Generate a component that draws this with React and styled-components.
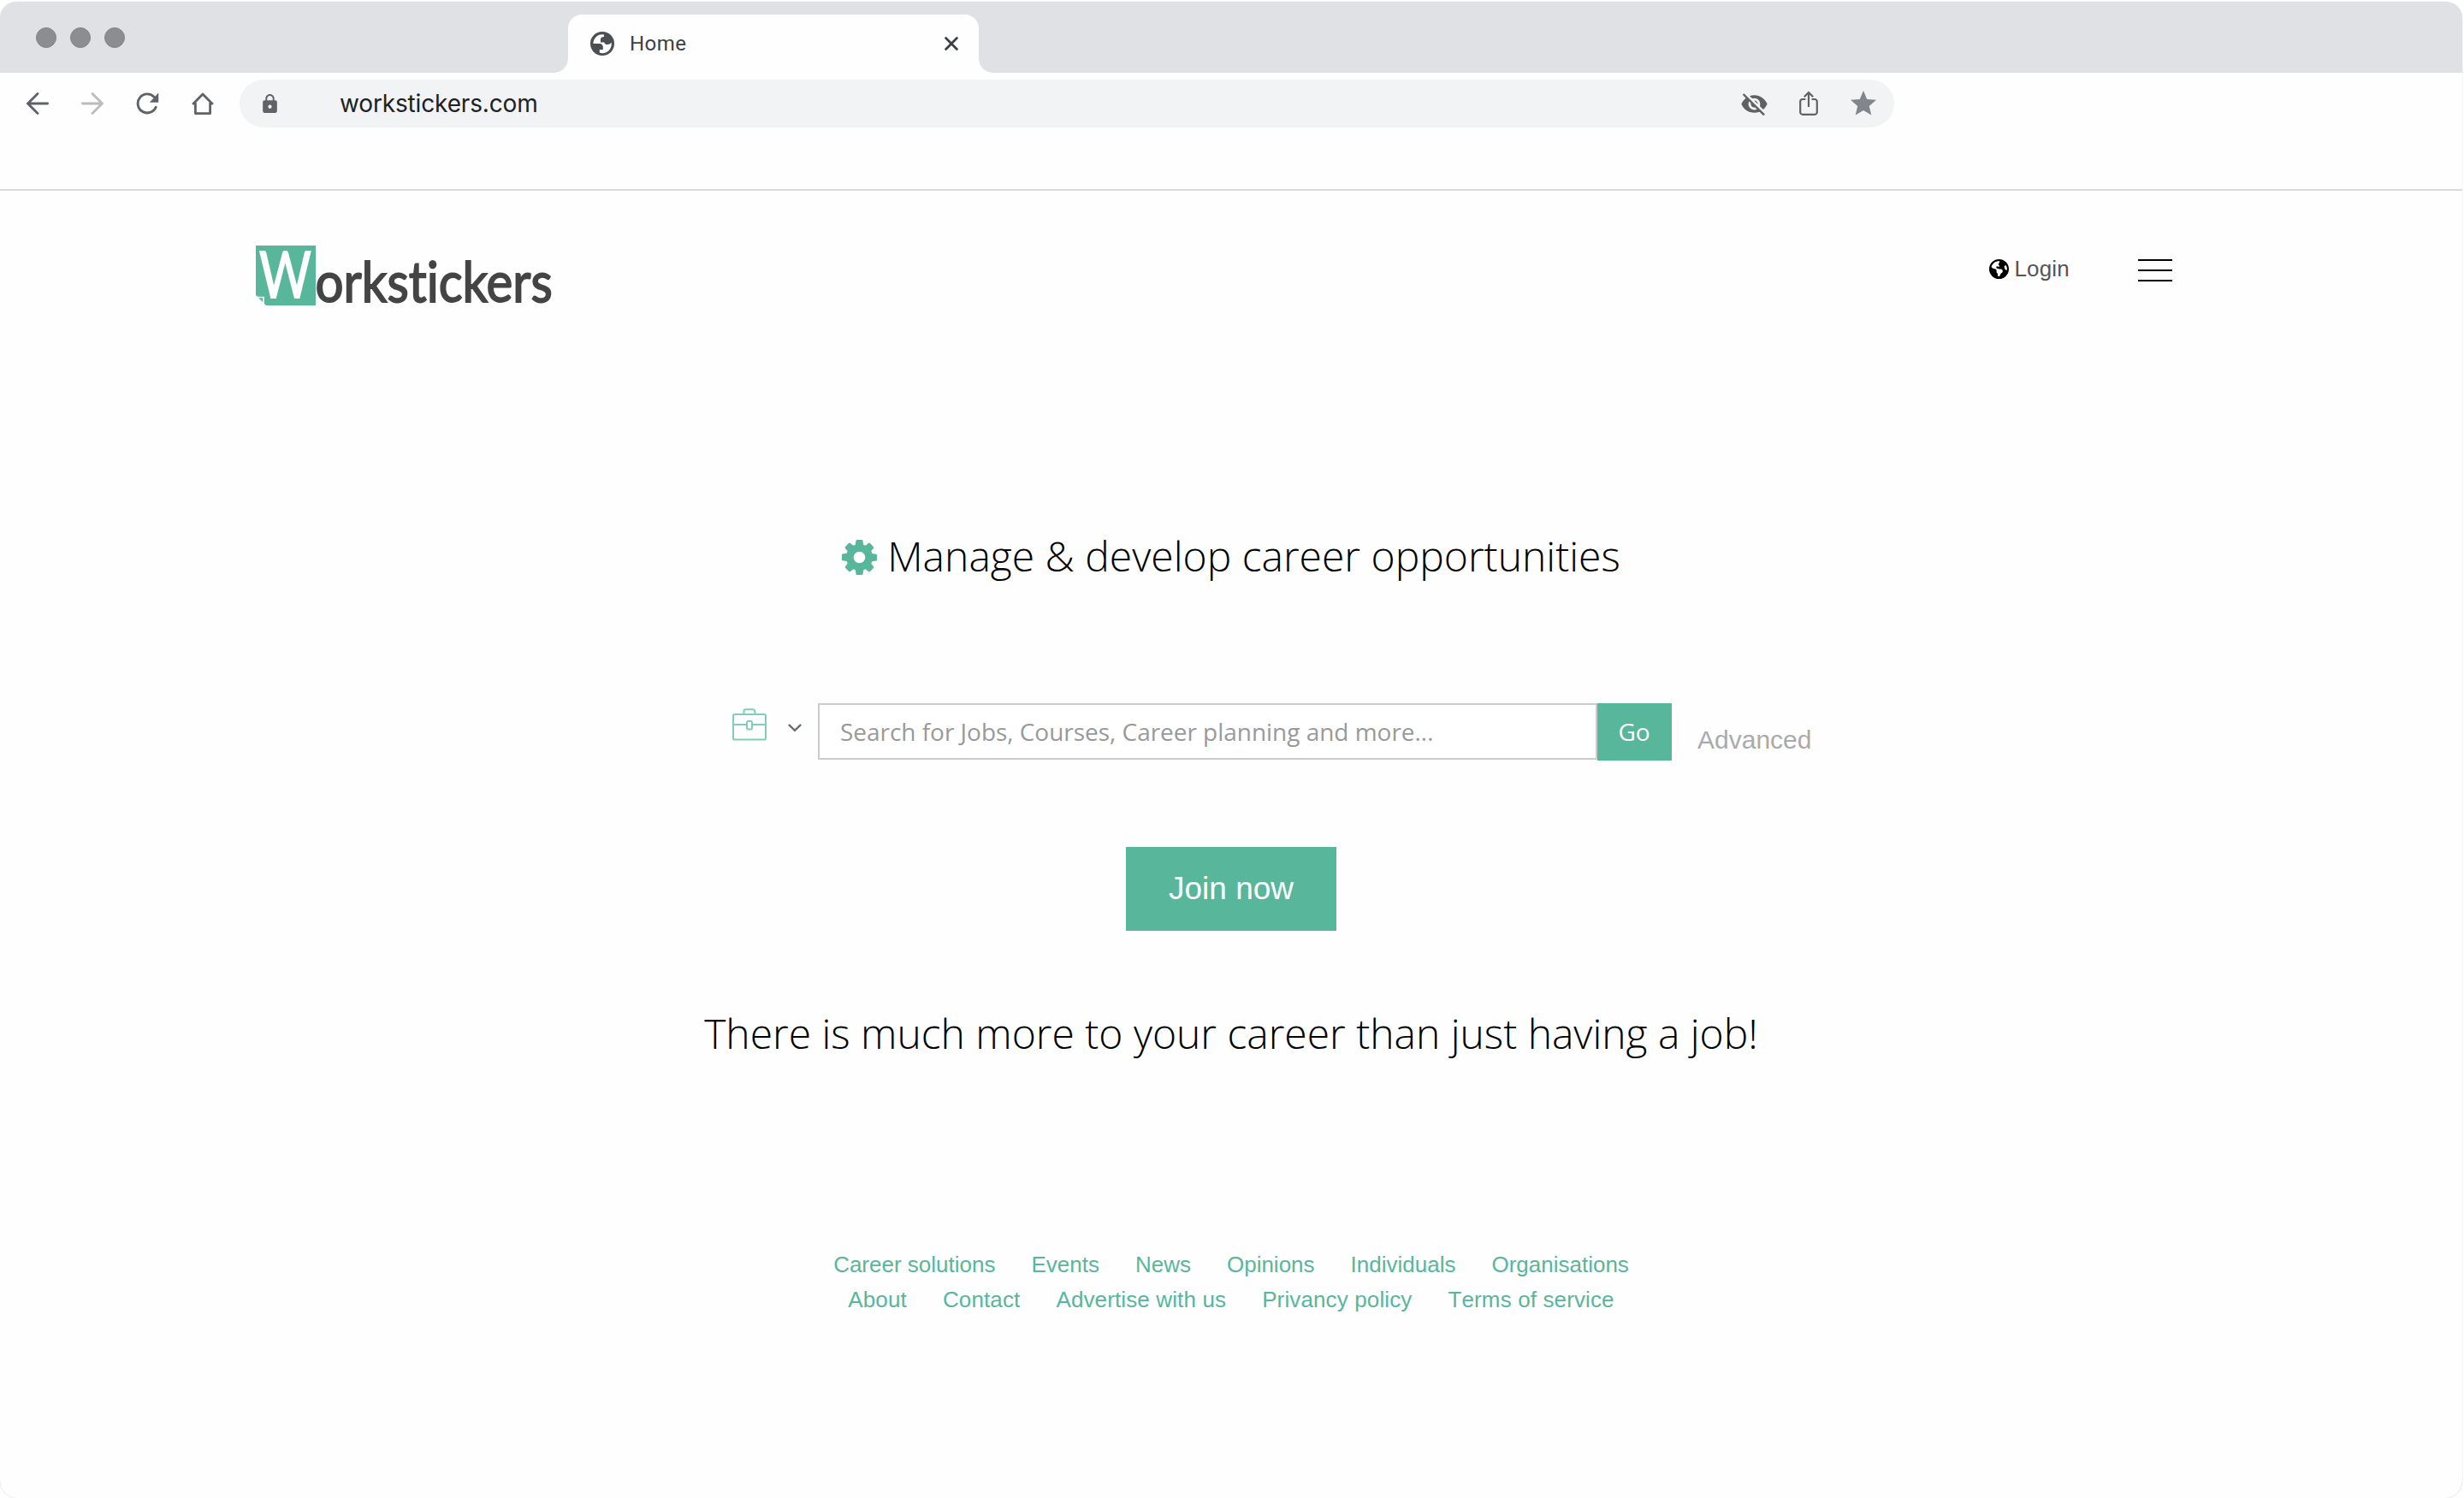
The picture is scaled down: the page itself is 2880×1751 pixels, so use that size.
import React from 'react'
import styled, { createGlobalStyle } from 'styled-components'
import { FaEarthAmericas } from 'react-icons/fa6'
import { MdStar, MdLock, MdVisibilityOff } from 'react-icons/md'

const green = '#58b69b'

const footerLinks = [
    ['Career solutions', 'Events', 'News', 'Opinions', 'Individuals', 'Organisations'],
    ['About', 'Contact', 'Advertise with us', 'Privancy policy', 'Terms of service'],
]

const GlobeIcon = () => (
    <svg width="28" height="28" viewBox="0 0 28 28">
        <circle cx="14" cy="14" r="14" fill="#4d4e53" />
        <path
            fill="#fff"
            d="M3.4 14A10.6 10.6 0 0 1 16 3.4V6C13.6 6.3 12 7 12 8.6V12.4H16.4C17 14.2 18 15 19 15H20.8C22.4 15 23.4 14.2 24 13H24.6A10.6 10.6 0 0 1 10.8 24.6V21H14.8V17.6C14.4 15.4 13 14 11 14Z"
        />
    </svg>
)

const CloseIcon = () => (
    <svg width="16" height="16" viewBox="0 0 16 16" stroke="#3c4043" strokeWidth="2.8" strokeLinecap="round">
        <path d="M1.6 1.6 14.4 14.4M14.4 1.6 1.6 14.4" />
    </svg>
)

const ArrowIcon = ({ forward }) => (
    <svg width="26" height="26" viewBox="0 0 26 26" fill="none" stroke={forward ? '#babcbe' : '#5f6368'} strokeWidth="2.8" strokeLinecap="round">
        <path d={forward ? 'M1.4 13H24M13 1.6 24.4 13 13 24.4' : 'M24.6 13H2M13 1.6 1.6 13 13 24.4'} />
    </svg>
)

const ReloadIcon = () => (
    <svg width="27" height="26" viewBox="0 0 28 26" fill="none">
        <path d="M24 17.6A11.4 11.4 0 1 1 22 5.2" stroke="#5f6368" strokeWidth="3" strokeLinecap="round" />
        <path d="M27.2 0V11.6H16.4Z" fill="#5f6368" />
    </svg>
)

const HomeIcon = () => (
    <svg width="26" height="26" viewBox="0 0 26 26" fill="none" stroke="#5f6368" strokeWidth="2.8">
        <path d="M1.2 14 13 2 24.8 14M4.4 12V24.6H21.6V12" strokeLinejoin="round" />
    </svg>
)

const ShareIcon = () => (
    <svg width="22" height="30" viewBox="0 0 22 30" fill="none" stroke="#5f6163" strokeWidth="2.2">
        <path d="M7.4 10H4A2.8 2.8 0 0 0 1.2 12.8V25A2.8 2.8 0 0 0 4 27.8H18A2.8 2.8 0 0 0 20.8 25V12.8A2.8 2.8 0 0 0 18 10H14.6" />
        <path d="M11 19V2.4M5.8 7.2 11 2 16.2 7.2" />
    </svg>
)

const GearIcon = () => (
    <svg width="41" height="41" viewBox="128 128 1536 1536" fill={green}>
        <path d="M1152 896q0-106-75-181t-181-75-181 75-75 181 75 181 181 75 181-75 75-181zm512-109v222q0 12-8 23t-20 13l-185 28q-19 54-39 91 35 50 107 138 10 12 10 25t-9 23q-27 37-99 108t-94 71q-12 0-26-9l-138-108q-44 23-91 38-16 136-29 186-7 28-36 28h-222q-14 0-24.5-8.5t-11.5-21.5l-28-184q-49-16-90-37l-141 107q-10 9-25 9-14 0-25-11-126-114-165-168-7-10-7-23 0-12 8-23 15-21 51-66.5t54-70.5q-27-50-41-99l-183-27q-13-2-21-12.5t-8-23.5v-222q0-12 8-23t19-13l186-28q14-46 39-92-40-57-107-138-10-12-10-24 0-10 9-23 26-36 98.5-107.5t94.5-71.5q13 0 26 10l138 107q44-23 91-38 16-136 29-186 7-28 36-28h222q14 0 24.5 8.5t11.5 21.5l28 184q49 16 90 37l142-107q9-9 24-9 13 0 25 10 129 119 165 170 7 8 7 22 0 12-8 23-15 21-51 66.5t-54 70.5q26 50 41 98l183 28q13 2 21 12.5t8 23.5z" />
    </svg>
)

const BriefcaseIcon = () => (
    <svg width="40" height="38" viewBox="0 0 40 38" fill="none" stroke="#80cdb8" strokeWidth="2">
        <rect x="1" y="7" width="38" height="29.6" rx="1.6" />
        <path d="M13.4 7V3.6A2.4 2.4 0 0 1 15.8 1.2H24A2.4 2.4 0 0 1 26.4 3.6V7M1 19H17M23 19H39" />
        <rect x="17" y="15" width="6" height="9.4" rx="1.6" />
    </svg>
)

const ChevronIcon = () => (
    <svg width="16" height="10" viewBox="0 0 16 10" fill="none" stroke="#676e73" strokeWidth="2.4" strokeLinecap="round">
        <path d="M1.6 1.6 8 7.8 14.4 1.6" />
    </svg>
)

const Logo = () => (
    <LogoSvg width="356" height="92" viewBox="0 -10 356 92">
        <path d="M0 0H70V70H12L0 58Z" fill={green} />
        <path d="M1 60.5H9V69" fill="none" stroke="#fff" strokeWidth="1.6" />
        <g transform="translate(4 61) scale(0.75 1)">
            <LogoText fontSize="75" textLength="81" fill="#fff" stroke="#fff">W</LogoText>
        </g>
        <g transform="translate(69.5 65.5) scale(0.9 1)">
            <LogoText fontSize="66" textLength="308" fill="#444" stroke="#444">orkstickers</LogoText>
        </g>
    </LogoSvg>
)

const App = () => (
    <>
        <GlobalStyle />
        <BrowserWindow>
            <TabStrip>
                <Dots>
                    <Dot />
                    <Dot />
                    <Dot />
                </Dots>
                <Tab>
                    <GlobeIcon />
                    <TabTitle>Home</TabTitle>
                    <CloseIcon />
                </Tab>
            </TabStrip>
            <Toolbar>
                <NavIcons>
                    <ArrowIcon />
                    <ArrowIcon forward />
                    <ReloadIcon />
                    <HomeIcon />
                </NavIcons>
                <AddressBar>
                    <MdLock size={25} color="#5f6368" />
                    <Url>workstickers.com</Url>
                    <AddressIcons>
                        <MdVisibilityOff size={33} color="#5f6163" />
                        <ShareIcon />
                        <MdStar size={36} color="#80868b" />
                    </AddressIcons>
                </AddressBar>
            </Toolbar>

            <Header>
                <Logo />
                <HeaderNav>
                    <Login>
                        <FaEarthAmericas size={23} color="#000" />
                        Login
                    </Login>
                    <MenuButton>
                        <MenuLine />
                        <MenuLine />
                        <MenuLine />
                    </MenuButton>
                </HeaderNav>
            </Header>

            <Main>
                <Title>
                    <GearIcon />
                    <span>Manage &amp; develop career opportunities</span>
                </Title>
                <SearchRow>
                    <Category>
                        <BriefcaseIcon />
                        <ChevronIcon />
                    </Category>
                    <SearchInput placeholder="Search for Jobs, Courses, Career planning and more..." />
                    <GoButton>Go</GoButton>
                    <Advanced>Advanced</Advanced>
                </SearchRow>
                <JoinButton>Join now</JoinButton>
                <Tagline>There is much more to your career than just having a job!</Tagline>
            </Main>

            <Footer>
                {footerLinks.map((row, i) => (
                    <FooterRow key={i}>
                        {row.map(name => <FooterLink key={name}>{name}</FooterLink>)}
                    </FooterRow>
                ))}
            </Footer>
        </BrowserWindow>
    </>
)

export default App

const GlobalStyle = createGlobalStyle`
    * {
        box-sizing: border-box;
    }
    body {
        margin: 0;
        background: #fff;
        font-family: "Liberation Sans", Arial, sans-serif;
    }
    svg {
        display: block;
        flex-shrink: 0;
    }
`

const BrowserWindow = styled.div`
    width: 2878px;
    height: 1749px;
    margin-top: 2px;
    border-radius: 20px;
    background: #fefefe;
    box-shadow: 0 0 1px rgba(0, 0, 0, 0.35);
    overflow: hidden;
`

const TabStrip = styled.div`
    display: flex;
    align-items: flex-end;
    height: 83px;
    background: #dfe1e5;
`

const Dots = styled.div`
    display: flex;
    gap: 16px;
    width: 664px;
    padding: 0 0 29px 42px;
`

const Dot = styled.div`
    width: 24px;
    height: 24px;
    border-radius: 50%;
    border: 1px solid #828385;
    background: #8c8d8f;
`

/* the two pseudo elements are the flared feet of the tab */
const Tab = styled.div`
    position: relative;
    display: flex;
    align-items: center;
    width: 480px;
    height: 68px;
    padding: 0 24px 0 26px;
    border-radius: 16px 16px 0 0;
    background: #fefefe;

    &::before, &::after {
        content: "";
        position: absolute;
        bottom: 0;
        width: 16px;
        height: 16px;
    }
    &::before {
        left: -16px;
        background: radial-gradient(circle at 0 0, transparent 15.5px, #fefefe 16px);
    }
    &::after {
        right: -16px;
        background: radial-gradient(circle at 100% 0, transparent 15.5px, #fefefe 16px);
    }
`

const TabTitle = styled.span`
    flex: 1;
    margin-left: 18px;
    font: 24px Roboto, sans-serif;
    letter-spacing: 0.5px;
    color: #3c4043;
`

const Toolbar = styled.div`
    display: flex;
    align-items: flex-start;
    height: 138px;
    padding-top: 8px;
    border-bottom: 2px solid #d9dadc;
`

const NavIcons = styled.div`
    display: flex;
    align-items: center;
    gap: 38px;
    width: 280px;
    height: 55px;
    padding-left: 31px;
`

const AddressBar = styled.div`
    display: flex;
    align-items: center;
    width: 1934px;
    height: 56px;
    padding: 0 18px 0 23px;
    border-radius: 28px;
    background: #f1f3f4;
`

const Url = styled.span`
    flex: 1;
    margin-left: 69px;
    font: 28px Inter, sans-serif;
    letter-spacing: -0.15px;
    color: #202124;
`

const AddressIcons = styled.div`
    display: flex;
    align-items: center;
    gap: 35px;

    svg:first-child {
        margin-right: 1px;
    }
`

const Header = styled.header`
    display: flex;
    justify-content: space-between;
    align-items: flex-start;
    height: 138px;
    padding: 54px 339px 0 299px;
`

const LogoSvg = styled.svg`
    overflow: visible;
`

const LogoText = styled.text.attrs({ lengthAdjust: 'spacingAndGlyphs' })`
    font-family: Lato, sans-serif;
    font-variant-ligatures: none;
    stroke-width: 1.8px;
`

const HeaderNav = styled.nav`
    display: flex;
    align-items: center;
    gap: 80px;
    padding-top: 20px;
`

const Login = styled.a`
    display: flex;
    align-items: center;
    gap: 6px;
    font-size: 26px;
    line-height: 34px;
    letter-spacing: 0.2px;
    color: #555;
`

const MenuButton = styled.div`
    display: flex;
    flex-direction: column;
    gap: 10px;
    width: 40px;
    margin-top: 4px;
`

const MenuLine = styled.span`
    height: 2px;
    background: #000;
`

const Main = styled.main`
    display: flex;
    flex-direction: column;
    align-items: center;
`

const Title = styled.h1`
    display: flex;
    align-items: center;
    gap: 12px;
    height: 68px;
    margin: 256px 0 0;
    font: 300 48px/66px "Open Sans", sans-serif;
    color: #000;

    span {
        margin-top: -2px;
    }
`

const Tagline = styled.h2`
    height: 68px;
    margin: 86px 0 0;
    font: 300 48px/68px "Open Sans", sans-serif;
    letter-spacing: -0.02px;
    color: #000;
`

const SearchRow = styled.div`
    display: flex;
    align-items: flex-start;
    width: 1262px;
    margin: 137px 0 0 96px;
`

const Category = styled.div`
    display: flex;
    align-items: center;
    gap: 25px;
    width: 100px;
    margin-top: 6px;

    svg:last-child {
        margin-top: 7px;
    }
`

const SearchInput = styled.input`
    width: 911px;
    height: 66px;
    padding: 0 24px 1px;
    border: 2px solid #ccc;
    background: #fff;
    font: 28px "Open Sans", sans-serif;
    letter-spacing: -0.03px;
    outline: none;

    &::placeholder {
        color: #999;
        opacity: 1;
    }
`

const GoButton = styled.button`
    width: 87px;
    height: 67px;
    padding: 0 1px 1px 0;
    border: 0;
    background: ${green};
    font: 28px "Open Sans", sans-serif;
    color: #fff;
`

const Advanced = styled.a`
    margin: 26px 0 0 30px;
    font-size: 30px;
    line-height: 34px;
    color: #aaa;
`

const JoinButton = styled.button`
    width: 246px;
    height: 98px;
    margin-top: 101px;
    padding: 0;
    border: 0;
    background: ${green};
    font: 37px "Liberation Sans", Arial, sans-serif;
    color: #fff;
`

const Footer = styled.footer`
    display: flex;
    flex-direction: column;
    align-items: center;
    margin-top: 216px;
`

const FooterRow = styled.div`
    display: flex;
    gap: 42px;

    &:last-child {
        letter-spacing: 0.13px;
    }
`

const FooterLink = styled.a`
    font-size: 26px;
    line-height: 41px;
    font-kerning: none;
    color: ${green};
`
